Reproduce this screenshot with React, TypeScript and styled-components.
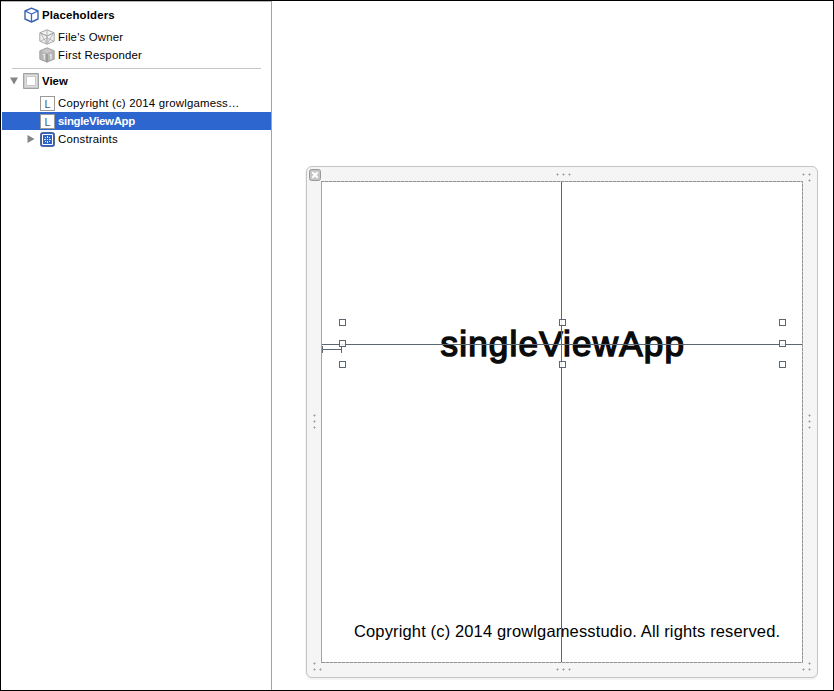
import React from "react";
import styled, { createGlobalStyle, css } from "styled-components";

const GlobalStyle = createGlobalStyle`
  * { box-sizing: border-box; }
  body { margin: 0; background: #fff; overflow: hidden; }
`;

const Window = styled.div`
  display: flex;
  width: 834px;
  height: 691px;
  border: 1px solid #000;
  background: #fff;
  color: #000;
  font-family: "Liberation Sans", Arial, sans-serif;
`;

const Sidebar = styled.aside`
  width: 271px;
  flex: none;
  padding: 4px 0 0 1px;
  border-right: 1px solid #a3a3a3;
  border-top: 1px solid #b5b5b5;
`;

const Row = styled.div<{ $indent: number; $bold?: boolean; $selected?: boolean; $spacing?: number }>`
  display: flex;
  align-items: center;
  height: 18px;
  padding-left: ${(p) => p.$indent}px;
  font-size: 11.4px;
  line-height: 18px;
  letter-spacing: ${(p) => p.$spacing ?? 0.2}px;
  white-space: nowrap;
  ${(p) => p.$bold && css`font-weight: bold;`}
  ${(p) => p.$selected && css`
    background: #2e66d0;
    color: #fff;
  `}
  svg { flex: none; display: block; }
`;

const Label = styled.span<{ $gap?: number }>`
  margin-left: ${(p) => p.$gap ?? 3}px;
`;

const Group = styled.div<{ $top?: number }>`
  margin-top: ${(p) => p.$top ?? 0}px;
`;

const Divider = styled.div`
  height: 1px;
  margin: 4px 10px 3px 10px;
  background: #c6c6c6;
`;

const LabelIcon = styled.span`
  width: 15px;
  height: 15px;
  flex: none;
  border: 1px solid #999;
  background: #fff;
  color: #4c5a68;
  font-size: 11px;
  font-weight: normal;
  line-height: 14px;
  letter-spacing: 0;
  text-align: center;
`;

const Editor = styled.main`
  flex: 1;
  padding: 165px 0 0 34px;
`;

const Bezel = styled.div`
  position: relative;
  width: 512px;
  height: 512px;
  padding: 14px;
  border: 1px solid #c3c5c5;
  border-radius: 6px;
  background: #f5f5f5;
  box-shadow: 0 2px 1px #f3f3f3, -1px 0 #f5f5f5;
`;

const Canvas = styled.div`
  position: relative;
  width: 482px;
  height: 482px;
  background: #fff;
`;

const Title = styled.div`
  position: absolute;
  left: 119.5px;
  top: 143px;
  font-size: 35px;
  line-height: 40px;
  letter-spacing: 1.2px;
  color: #0b0b0b;
  -webkit-text-stroke: 1.5px #0b0b0b;
  white-space: nowrap;
`;

const Copyright = styled.div`
  position: absolute;
  left: 33px;
  top: 440px;
  font-size: 16.5px;
  line-height: 20px;
  letter-spacing: 0.14px;
  white-space: nowrap;
`;

const Overlay = styled.svg`
  position: absolute;
  left: 0;
  top: 0;
  display: block;
`;

function Cube({ kind }: { kind: "blue" | "wire" | "solid" }) {
  const c = kind === "blue" ? "#3265c8" : "#969696";
  return (
    <svg width={kind === "blue" ? 15 : 16} height="16" viewBox={kind === "blue" ? "0.5 0.5 15 15" : "0 0 16 16"} fill="none" stroke={c} strokeLinejoin="round">
      <path
        d={kind === "blue" ? "M8 1.1 14.5 4v8L8 15 1.5 12V4z" : "M8 .8 15.2 3.8v8.4L8 15.2.8 12.2V3.8z"}
        fill={kind === "solid" ? "#b4b4b4" : kind === "wire" ? "#f1f1f1" : "#fff"}
        stroke={kind === "blue" ? "#3d64ae" : "#a6a6a6"}
        strokeWidth={kind === "blue" ? 1.4 : 1}
      />
      {kind !== "solid" && <path d="M1.5 4 8 7l6.5-3M8 7v8" strokeWidth={kind === "blue" ? 1.3 : 1} />}
      {kind === "wire" && <path d="M8 1.1V9M1.5 12 8 9l6.5 3M1.5 4 8 15M14.5 4 8 15" stroke="#b5b5b5" />}
      {kind === "solid" && (
        <>
          <path d="M2.5 4 8 1.8 13.5 4 8 6.3z" fill="#c9c9c9" stroke="none" />
          <path d="m3.8 7.5 1.4-.1v5M10.6 8.2l1.4-.8v4.8" stroke="#f2f2f2" strokeWidth="1.1" />
          <path d="M8 7v8" stroke="#858585" />
        </>
      )}
    </svg>
  );
}

const ViewIcon = () => (
  <svg width="16" height="16" viewBox="0 0 16 16">
    <path d="M.5.5h15v15H.5z" fill="#c9c9c9" stroke="#a0a0a0" />
    <path d="M2.5 2.5h11v11h-11z" fill="none" stroke="#f2f2f2" strokeDasharray="1 1" />
    <path d="M4 4h8v8H4z" fill="#fff" />
  </svg>
);

const ConstraintsIcon = () => (
  <svg width="15" height="15" viewBox="0 0 15 15">
    <rect x=".5" y=".5" width="14" height="14" rx="2" fill="#2c62c7" stroke="#4b6798" />
    <path d="M2.5 2.5h10v10h-10z" fill="none" stroke="#fff" />
    <path d="M7.5 4v2m0 1v1m0 1v2M4 7.5h2m3 0h2M5 5.5h1M9 5.5h1M5 9.5h1M9 9.5h1" stroke="#e4ecfb" />
  </svg>
);

const Disclosure = ({ open }: { open?: boolean }) => (
  <svg width="10" height="10" viewBox="0 0 10 10" fill="#858585">
    <path d={open ? "M1 1.5h8L5 8.5z" : "M1.5 1 8.5 5 1.5 9z"} />
  </svg>
);

const GRIPS: [number, number][] = [
  [251, 8], [257, 8], [263, 8],
  [251, 503], [257, 503], [263, 503],
  [8, 249], [8, 255], [8, 261],
  [503, 249], [503, 255], [503, 261],
  [497, 8], [503, 8], [503, 14],
  [8, 497], [8, 503], [14, 503],
  [497, 503], [503, 503], [503, 497],
];

const Grips = () => (
  <Overlay width="510" height="510" viewBox="1 1 510 510">
    {GRIPS.map(([x, y]) => (
      <g key={`${x}-${y}`}>
        <path d={`M${x - 1} ${y + 0.5}h3M${x + 0.5} ${y - 1}v3`} stroke="#c2c2c2" />
        <path d={`M${x} ${y}h1v1h-1z`} fill="#a0a0a0" />
      </g>
    ))}
    <rect x="3.5" y="3.5" width="11" height="11" rx="2" fill="#c5c5c5" stroke="#999" />
    <path d="m6.3 6.3 5.4 5.4m0-5.4-5.4 5.4" stroke="#fff" strokeWidth="2" />
  </Overlay>
);

const Guides = () => (
  <Overlay width="482" height="482" viewBox="321 181 482 482" fill="none" stroke="#5b6773">
    <path d="M321.5 181.5h481v481h-481z" stroke="#c4c4c4" />
    <path d="M321.5 663V181" stroke="#a3a3a3" />
    <path d="M321 181.5h481.5v481H321" stroke="#929292" strokeDasharray="3 1" />
    <path d="M561.5 182v480M322 344.5h480M322 349.5h20M322.5 346v7M341.5 346v7" />
    {[342, 562, 782].flatMap((x) =>
      [322, 343, 364]
        .filter((y) => !(x === 562 && y === 343))
        .map((y) => (
          <rect key={`${x}-${y}`} x={x - 2.5} y={y - 2.5} width="6" height="6" fill="#fff" fillOpacity=".85" />
        )),
    )}
  </Overlay>
);

export default function App() {
  return (
    <>
      <GlobalStyle />
      <Window>
        <Sidebar>
          <Row $indent={22} $bold $spacing={0.15}>
            <Cube kind="blue" />
            <Label>Placeholders</Label>
          </Row>
          <Group $top={4}>
            <Row $indent={37}>
              <Cube kind="wire" />
              <Label>File's Owner</Label>
            </Row>
            <Row $indent={37}>
              <Cube kind="solid" />
              <Label>First Responder</Label>
            </Row>
          </Group>
          <Divider />
          <Row $indent={7} $bold $spacing={0}>
            <Disclosure open />
            <Label $gap={4}><ViewIcon /></Label>
            <Label>View</Label>
          </Row>
          <Group $top={4}>
            <Row $indent={38}>
              <LabelIcon>L</LabelIcon>
              <Label>Copyright (c) 2014 growlgamess…</Label>
            </Row>
            <Row $indent={38} $bold $selected $spacing={-0.3}>
              <LabelIcon>L</LabelIcon>
              <Label>singleViewApp</Label>
            </Row>
            <Row $indent={24}>
              <Disclosure />
              <Label $gap={4}><ConstraintsIcon /></Label>
              <Label>Constraints</Label>
            </Row>
          </Group>
        </Sidebar>
        <Editor>
          <Bezel>
            <Grips />
            <Canvas>
              <Title>singleViewApp</Title>
              <Copyright>Copyright (c) 2014 growlgamesstudio. All rights reserved.</Copyright>
              <Guides />
            </Canvas>
          </Bezel>
        </Editor>
      </Window>
    </>
  );
}
